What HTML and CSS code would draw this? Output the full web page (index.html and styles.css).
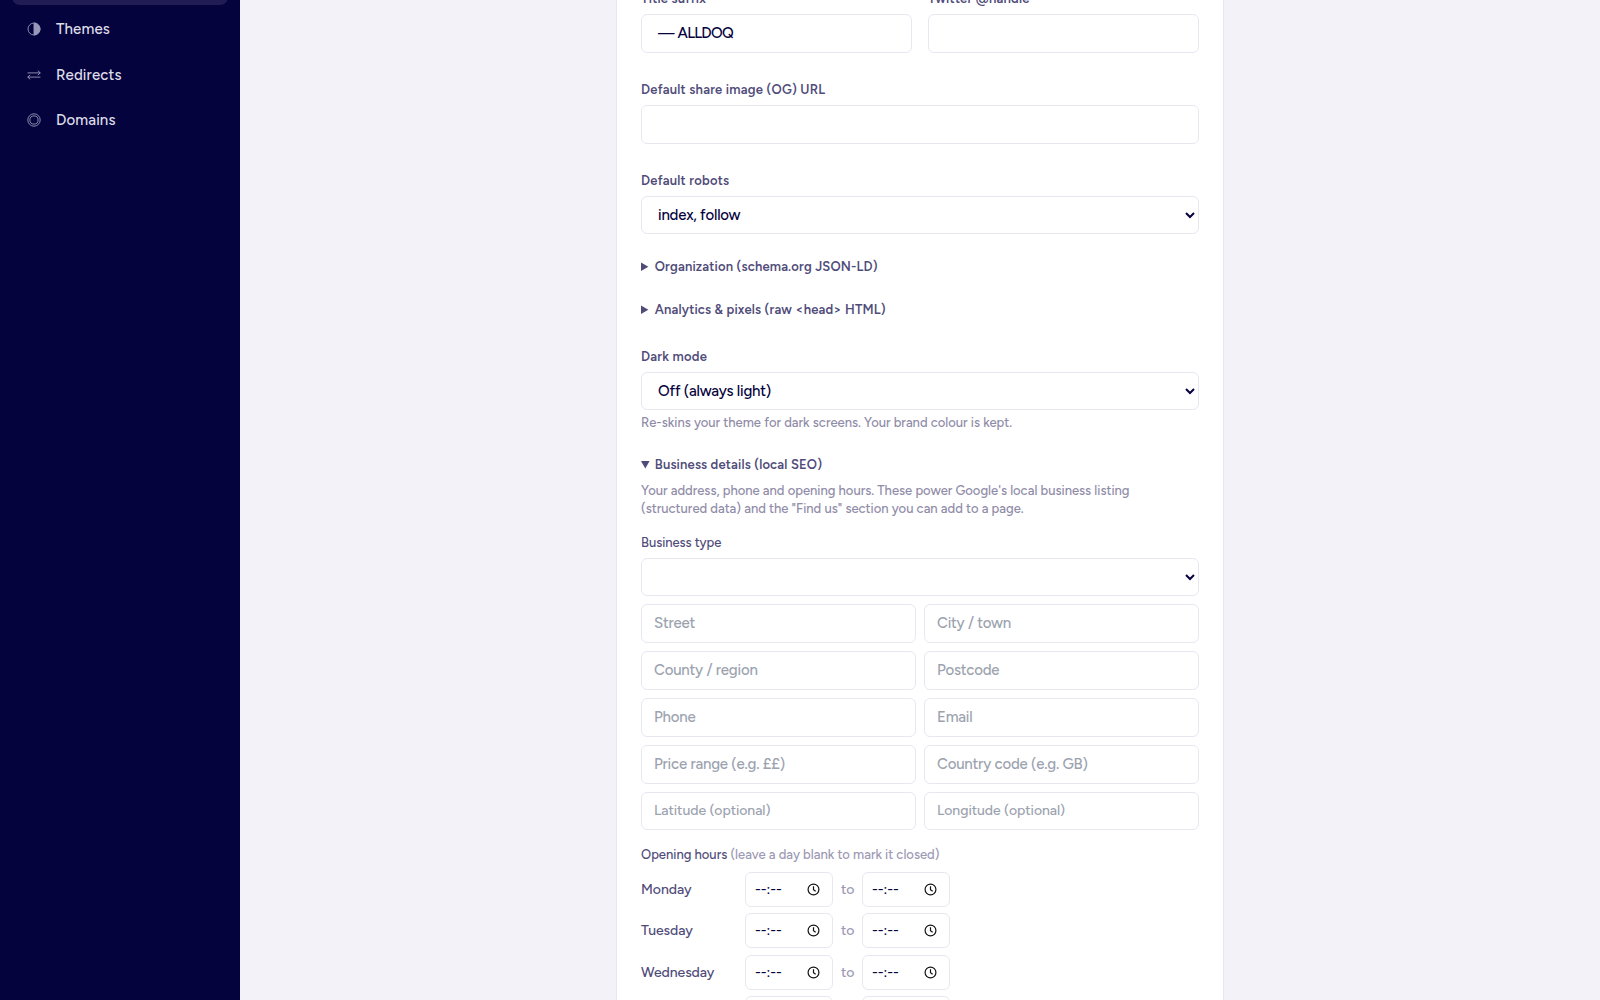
FILE: index.html
```
<!DOCTYPE html>
<html lang="en">
<head>
  <meta charset="UTF-8" />
  <meta name="viewport" content="width=device-width, initial-scale=1" />
  <title>Site settings</title>
  <link rel="stylesheet" href="styles.css">
</head>
<body>

  <aside class="sidebar">
    <a class="nav-item active" href="#"></a>
    <a class="nav-item" href="#">
      <svg class="nav-icon" viewBox="0 0 14 14"><circle cx="7" cy="7" r="6" /><path class="solid" d="M7 1a6 6 0 0 1 0 12z" /></svg>
      Themes
    </a>
    <a class="nav-item" href="#">
      <svg class="nav-icon" viewBox="0 0 14 14"><path d="M.5 4.9h12.7M10.8 2.7l2.5 2.2-2.5 2.2M13.4 9.1H.8M3.2 6.9L.7 9.1l2.5 2.2" /></svg>
      Redirects
    </a>
    <a class="nav-item" href="#">
      <svg class="nav-icon" viewBox="0 0 14 14"><circle cx="7" cy="7" r="6.2" /><circle cx="7" cy="7" r="4.1" /></svg>
      Domains
    </a>
  </aside>

  <main>
    <form class="card">
      <div class="row">
        <div class="field">
          <label for="suffix">Title suffix</label>
          <input type="text" id="suffix" value=" — ALLDOQ" />
        </div>
        <div class="field">
          <label for="twitter">Twitter @handle</label>
          <input type="text" id="twitter" />
        </div>
      </div>

      <div class="field">
        <label for="og">Default share image (OG) URL</label>
        <input type="text" id="og" />
      </div>

      <div class="field">
        <label for="robots">Default robots</label>
        <select id="robots"><option>index, follow</option></select>
      </div>

      <details>
        <summary>Organization (schema.org JSON-LD)</summary>
      </details>
      <details>
        <summary>Analytics &amp; pixels (raw &lt;head&gt; HTML)</summary>
      </details>

      <div class="field">
        <label for="dark">Dark mode</label>
        <select id="dark"><option>Off (always light)</option></select>
        <p class="hint">Re-skins your theme for dark screens. Your brand colour is kept.</p>
      </div>

      <details open>
        <summary class="business">Business details (local SEO)</summary>
        <p class="intro">Your address, phone and opening hours. These power Google's local business listing<br>(structured data) and the "Find us" section you can add to a page.</p>
        <label class="sub-label" for="type">Business type</label>
        <select id="type"><option></option></select>

        <div class="grid">
          <input type="text" placeholder="Street" />
          <input type="text" placeholder="City / town" />
          <input type="text" placeholder="County / region" />
          <input type="text" placeholder="Postcode" />
          <input type="text" placeholder="Phone" />
          <input type="text" placeholder="Email" />
          <input type="text" placeholder="Price range (e.g. ££)" />
          <input type="text" placeholder="Country code (e.g. GB)" />
          <input type="text" class="small" placeholder="Latitude (optional)" />
          <input type="text" class="small" placeholder="Longitude (optional)" />
        </div>

        <p class="hours-label">Opening hours <span>(leave a day blank to mark it closed)</span></p>
        <div id="hours"></div>
      </details>
    </form>
  </main>

  <script>
    const hours = document.getElementById('hours');
    const clock = '<svg class="clock" viewBox="0 0 12 12"><circle cx="6" cy="6" r="5" /><path d="M6 3v3.2l2 1.5" /></svg>';
    const time = `<div class="time"><span>--:--</span>${clock}</div>`;

    ['Monday', 'Tuesday', 'Wednesday', 'Thursday'].forEach(day => {
      const row = document.createElement('div');
      row.className = 'day-row';
      row.innerHTML = `<span class="day">${day}</span>${time}<span class="to">to</span>${time}`;
      hours.appendChild(row);
    });
  </script>

</body>
</html>
```
FILE: styles.css
```
* {
  box-sizing: border-box;
}

body {
  display: flex;
  height: 100vh;
  margin: 0;
  overflow: hidden;
  background: #f3f2f8;
  color: #05033d;
  font-family: Figtree, Roboto, "Liberation Sans", sans-serif;
  font-weight: 500;
}

.sidebar {
  width: 240px;
  flex-shrink: 0;
  background: #05033d;
}

.nav-item {
  display: flex;
  align-items: center;
  gap: 15px;
  height: 41px;
  margin: 0 12px 4.5px;
  padding: 0 15px 2px;
  border-radius: 8px;
  color: #dddce8;
  font-size: 15px;
  letter-spacing: 0.12px;
  text-decoration: none;
}

.nav-item.active {
  margin-top: -36px;
  background: #211c54;
}

.nav-icon {
  width: 14px;
  height: 14px;
  fill: none;
  stroke: #9a98b8;
  stroke-width: 0.9;
}

.nav-icon .solid {
  fill: #9a98b8;
}

main {
  flex: 1;
}

.card {
  width: 608px;
  height: 1200px;
  margin: -60px auto 0;
  padding: 48px 24px 0;
  background: white;
  border: 1px solid #e8e7f0;
}

.row {
  display: flex;
  gap: 16px;
}

.field {
  flex: 1;
  margin-bottom: 27px;
}

label,
summary {
  display: block;
  margin-bottom: 5px;
  color: #504c7a;
  font-size: 13px;
  font-weight: 600;
  letter-spacing: 0.22px;
  line-height: 20px;
}

summary {
  display: list-item;
  margin: -4px 0 27px;
  letter-spacing: 0.17px;
}

summary.business {
  margin-bottom: 7px;
}

input,
select {
  display: block;
  width: 100%;
  height: 39px;
  padding: 0 12px;
  background: white;
  border: 1px solid #e8e7f0;
  border-radius: 6px;
  color: #05033d;
  font-family: inherit;
  font-size: 15px;
  font-weight: inherit;
  letter-spacing: -0.2px;
}

input {
  padding-bottom: 2px;
}

#suffix {
  letter-spacing: -0.75px;
  word-spacing: 1px;
}

select {
  height: 38px;
}

input::placeholder {
  color: #9ca3af;
}

.hint,
.intro,
.hours-label {
  margin: 0;
  color: #8f8ca8;
  font-size: 13px;
  letter-spacing: 0;
  line-height: 18px;
}

.hint {
  margin-top: 4px;
}

.sub-label {
  margin: 15px 0 5px;
  font-weight: 500;
  letter-spacing: -0.05px;
}

.grid {
  display: grid;
  grid-template-columns: 1fr 1fr;
  gap: 8px;
  margin-top: 8px;
}

input.small {
  height: 38px;
  font-size: 14px;
  letter-spacing: -0.05px;
}

.hours-label {
  margin: 16px 0 8px;
  color: #504c7a;
}

.hours-label span {
  color: #9c99b4;
}

.day-row {
  display: flex;
  align-items: center;
  gap: 8px;
  margin-bottom: 6.3px;
  font-size: 14px;
  letter-spacing: -0.05px;
}

.day {
  width: 96px;
  color: #504c7a;
}

.to {
  width: 13px;
  color: #9c99b4;
}

.time {
  display: flex;
  align-items: center;
  justify-content: space-between;
  width: 88px;
  height: 35px;
  padding: 0 12px 0 9px;
  border: 1px solid #e8e7f0;
  border-radius: 6px;
}

.clock {
  width: 13px;
  height: 13px;
  fill: none;
  stroke: #111;
  stroke-width: 1.1;
}
```
